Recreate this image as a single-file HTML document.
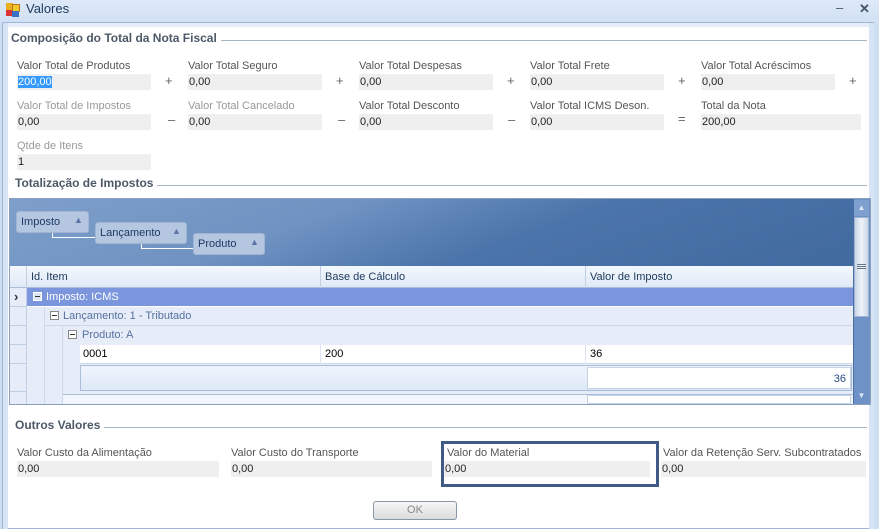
<!DOCTYPE html>
<html><head><meta charset="utf-8"><style>
*{margin:0;padding:0;box-sizing:border-box}
body{width:879px;height:529px;position:relative;overflow:hidden;font-family:"Liberation Sans",sans-serif;font-size:11px;background:#cfdff3;color:#000}
.a{position:absolute;white-space:nowrap}
.lbl{color:#555}
.lbl2{color:#999}
.box{position:absolute;background:#efefef;height:16px;padding:1px 1px;color:#222;line-height:14px}
.op{position:absolute;color:#666;font-size:13px}
.h{position:absolute;font-weight:bold;color:#4d5968;font-size:12px;white-space:nowrap;background:#fff;padding-right:4px;z-index:2}
.hl{position:absolute;height:1px;background:#a7b4c4}
</style></head><body>
<div class="a" style="left:0;top:0;width:879px;height:22px;background:linear-gradient(#dde9f8,#d2e1f5)"></div>
<div class="a" style="left:6px;top:3px;width:7px;height:7px;background:#e8b020"></div>
<div class="a" style="left:12px;top:4px;width:8px;height:8px;background:#f0c830;border:1px solid #c07010"></div>
<div class="a" style="left:6px;top:10px;width:6px;height:6px;background:#d33"></div>
<div class="a" style="left:12px;top:11px;width:7px;height:6px;background:#3a70c8"></div>
<div class="a" style="left:26px;top:1px;font-size:13px;color:#1e395b">Valores</div>
<div class="a" style="left:836px;top:0px;font-size:13px;color:#456">–</div>
<div class="a" style="left:859px;top:1px;font-size:13px;color:#456;font-weight:bold">✕</div>
<div class="a" style="left:2px;top:22px;width:872px;height:507px;border:1px solid #9fb6d6;background:#fff"></div>
<div class="a" style="left:3px;top:23px;width:5px;height:506px;background:#d6e4f5"></div>
<div class="a" style="left:869px;top:23px;width:5px;height:506px;background:#d6e4f5"></div>
<div class="a" style="left:8px;top:23px;width:861px;height:4px;background:#e4edf8"></div>

<div class="hl" style="left:11px;top:40px;width:856px"></div>
<div class="h" style="left:11px;top:31px">Composição do Total da Nota Fiscal</div>

<div class="a lbl" style="left:17px;top:60px">Valor Total de Produtos</div>
<div class="box" style="left:17px;top:74px;width:134px"><span style="background:#3399ff;color:#fff">200,00</span></div>
<div class="op" style="left:165px;top:73px">+</div>
<div class="a lbl" style="left:188px;top:60px">Valor Total Seguro</div>
<div class="box" style="left:188px;top:74px;width:134px">0,00</div>
<div class="op" style="left:336px;top:73px">+</div>
<div class="a lbl" style="left:359px;top:60px">Valor Total Despesas</div>
<div class="box" style="left:359px;top:74px;width:134px">0,00</div>
<div class="op" style="left:507px;top:73px">+</div>
<div class="a lbl" style="left:530px;top:60px">Valor Total Frete</div>
<div class="box" style="left:530px;top:74px;width:134px">0,00</div>
<div class="op" style="left:678px;top:73px">+</div>
<div class="a lbl" style="left:701px;top:60px">Valor Total Acréscimos</div>
<div class="box" style="left:701px;top:74px;width:134px">0,00</div>
<div class="op" style="left:849px;top:73px">+</div>

<div class="a lbl lbl2" style="left:17px;top:100px">Valor Total de Impostos</div>
<div class="box" style="left:17px;top:114px;width:134px">0,00</div>
<div class="op" style="left:168px;top:112px">–</div>
<div class="a lbl lbl2" style="left:188px;top:100px">Valor Total Cancelado</div>
<div class="box" style="left:188px;top:114px;width:134px">0,00</div>
<div class="op" style="left:338px;top:112px">–</div>
<div class="a lbl" style="left:359px;top:100px">Valor Total Desconto</div>
<div class="box" style="left:359px;top:114px;width:134px">0,00</div>
<div class="op" style="left:508px;top:112px">–</div>
<div class="a lbl" style="left:530px;top:100px">Valor Total ICMS Deson.</div>
<div class="box" style="left:530px;top:114px;width:134px">0,00</div>
<div class="op" style="left:678px;top:111px">=</div>
<div class="a lbl" style="left:701px;top:100px">Total da Nota</div>
<div class="box" style="left:701px;top:114px;width:160px">200,00</div>

<div class="a lbl lbl2" style="left:17px;top:140px">Qtde de Itens</div>
<div class="box" style="left:17px;top:154px;width:134px">1</div>

<div class="hl" style="left:15px;top:185px;width:852px"></div>
<div class="h" style="left:15px;top:176px">Totalização de Impostos</div>

<div class="a" style="left:9px;top:198px;width:862px;height:207px;border:1px solid #8ba0bd;background:#fff"></div>
<div class="a" style="left:10px;top:199px;width:843px;height:67px;background:linear-gradient(160deg,#7e9fca 0%,#6f92c2 35%,#4b74aa 60%,#416a9f 100%)"></div>
<div class="a" style="left:16px;top:211px;width:73px;height:22px;background:#b4c6e0;border-radius:3px;border:1px solid #a0b4d4;padding:4px 4px;color:#1e3a66">Imposto<span style="position:absolute;left:57px;top:3px;color:#5a76a4;font-size:9px">▲</span></div>
<div class="a" style="left:52px;top:233px;width:44px;height:5px;border-left:1px solid #fff;border-bottom:1px solid #fff"></div>
<div class="a" style="left:95px;top:222px;width:92px;height:22px;background:#b4c6e0;border-radius:3px;border:1px solid #a0b4d4;padding:4px 4px;color:#1e3a66">Lançamento<span style="position:absolute;left:76px;top:3px;color:#5a76a4;font-size:9px">▲</span></div>
<div class="a" style="left:141px;top:244px;width:53px;height:5px;border-left:1px solid #fff;border-bottom:1px solid #fff"></div>
<div class="a" style="left:193px;top:233px;width:72px;height:22px;background:#b4c6e0;border-radius:3px;border:1px solid #a0b4d4;padding:4px 4px;color:#1e3a66">Produto<span style="position:absolute;left:56px;top:3px;color:#5a76a4;font-size:9px">▲</span></div>

<div class="a" style="left:10px;top:266px;width:843px;height:22px;background:linear-gradient(#f4f8fd,#dfe9f6);border-bottom:1px solid #a9bcd8"></div>
<div class="a" style="left:26px;top:266px;width:1px;height:22px;background:#c0cfe4"></div>
<div class="a" style="left:320px;top:266px;width:1px;height:22px;background:#c0cfe4"></div>
<div class="a" style="left:585px;top:266px;width:1px;height:22px;background:#c0cfe4"></div>
<div class="a" style="left:31px;top:271px;color:#1e395b">Id. Item</div>
<div class="a" style="left:325px;top:271px;color:#1e395b">Base de Cálculo</div>
<div class="a" style="left:590px;top:271px;color:#1e395b">Valor de Imposto</div>

<div class="a" style="left:10px;top:288px;width:17px;height:116px;background:#e6edf8;border-right:1px solid #c0cfe4"></div>
<div class="a" style="left:10px;top:306px;width:17px;height:1px;background:#c0cfe4"></div>
<div class="a" style="left:10px;top:325px;width:17px;height:1px;background:#c0cfe4"></div>
<div class="a" style="left:10px;top:344px;width:17px;height:1px;background:#c0cfe4"></div>
<div class="a" style="left:10px;top:363px;width:17px;height:1px;background:#c0cfe4"></div>
<div class="a" style="left:10px;top:391px;width:17px;height:1px;background:#c0cfe4"></div>
<div class="a" style="left:14px;top:289px;color:#333;font-weight:bold;font-size:13px">›</div>
<div class="a" style="left:27px;top:288px;width:826px;height:18px;background:#7b96dc;color:#fff;padding:3px 0 0 19px">Imposto: ICMS</div>
<div class="a" style="left:33px;top:292px;width:9px;height:9px;border:1px solid #fff;background:#dde6f7"><div style="position:absolute;left:1px;top:3px;width:5px;height:1px;background:#333"></div></div>
<div class="a" style="left:27px;top:307px;width:826px;height:97px;background:#e6edf8"></div>
<div class="a" style="left:44px;top:307px;width:809px;height:19px;border-bottom:1px solid #cdd9ec;padding:3px 0 0 19px;color:#5670a0">Lançamento: 1 - Tributado</div>
<div class="a" style="left:50px;top:311px;width:9px;height:9px;border:1px solid #888;background:#fff"><div style="position:absolute;left:1px;top:3px;width:5px;height:1px;background:#333"></div></div>
<div class="a" style="left:44px;top:307px;width:1px;height:97px;background:#cdd9ec"></div>
<div class="a" style="left:62px;top:326px;width:791px;height:19px;border-left:1px solid #cdd9ec;padding:3px 0 0 19px;color:#5670a0">Produto: A</div>
<div class="a" style="left:68px;top:330px;width:9px;height:9px;border:1px solid #888;background:#fff"><div style="position:absolute;left:1px;top:3px;width:5px;height:1px;background:#333"></div></div>
<div class="a" style="left:62px;top:326px;width:1px;height:78px;background:#cdd9ec"></div>
<div class="a" style="left:80px;top:345px;width:773px;height:19px;background:#fff;border-bottom:1px solid #cdd9ec"></div>
<div class="a" style="left:320px;top:345px;width:1px;height:19px;background:#dde6f2"></div>
<div class="a" style="left:585px;top:345px;width:1px;height:19px;background:#dde6f2"></div>
<div class="a" style="left:83px;top:348px">0001</div>
<div class="a" style="left:325px;top:348px">200</div>
<div class="a" style="left:590px;top:348px">36</div>
<div class="a" style="left:80px;top:365px;width:772px;height:26px;border:1px solid #a9bcd8;background:linear-gradient(#f0f5fc,#dde8f6)"></div>
<div class="a" style="left:587px;top:367px;width:264px;height:22px;background:#fff;border:1px solid #c6d4e8;text-align:right;padding:5px 4px 0 0;color:#2a4a8a">36</div>
<div class="a" style="left:63px;top:394px;width:790px;height:10px;border-top:1px solid #a9bcd8;background:#f2f6fc"></div>
<div class="a" style="left:587px;top:395px;width:264px;height:9px;background:#fff;border:1px solid #c6d4e8"></div>

<div class="a" style="left:853px;top:199px;width:17px;height:205px;background:#6f92c6;border-left:1px solid #4a6ea6"></div>
<div class="a" style="left:854px;top:200px;width:15px;height:16px;background:#7fa0cf;color:#dde8f7;font-size:8px;text-align:center;line-height:16px">▲</div>
<div class="a" style="left:854px;top:217px;width:15px;height:100px;background:linear-gradient(90deg,#c9d6e8,#f0f4fa,#c9d6e8);border:1px solid #9fb3d1"></div>
<div class="a" style="left:857px;top:264px;width:9px;height:5px;border-top:1px solid #678;border-bottom:1px solid #678"></div>
<div class="a" style="left:857px;top:266px;width:9px;height:1px;background:#678"></div>
<div class="a" style="left:854px;top:389px;width:15px;height:14px;color:#dde8f7;font-size:8px;text-align:center;line-height:14px">▼</div>

<div class="hl" style="left:15px;top:427px;width:852px"></div>
<div class="h" style="left:15px;top:418px">Outros Valores</div>

<div class="a lbl" style="left:17px;top:447px">Valor Custo da Alimentação</div>
<div class="box" style="left:17px;top:461px;width:202px">0,00</div>
<div class="a lbl" style="left:231px;top:447px">Valor Custo do Transporte</div>
<div class="box" style="left:231px;top:461px;width:201px">0,00</div>
<div class="a" style="left:441px;top:441px;width:218px;height:46px;border:3px solid #3f5a84"></div>
<div class="a lbl" style="left:447px;top:447px">Valor do Material</div>
<div class="box" style="left:444px;top:461px;width:206px">0,00</div>
<div class="a lbl" style="left:663px;top:447px">Valor da Retenção Serv. Subcontratados</div>
<div class="box" style="left:661px;top:461px;width:205px">0,00</div>

<div class="a" style="left:373px;top:501px;width:84px;height:19px;border:1px solid #8a96a6;border-radius:3px;background:linear-gradient(#f6f6f6,#dcdcdc);color:#888;text-align:center;line-height:17px">OK</div>
</body></html>
